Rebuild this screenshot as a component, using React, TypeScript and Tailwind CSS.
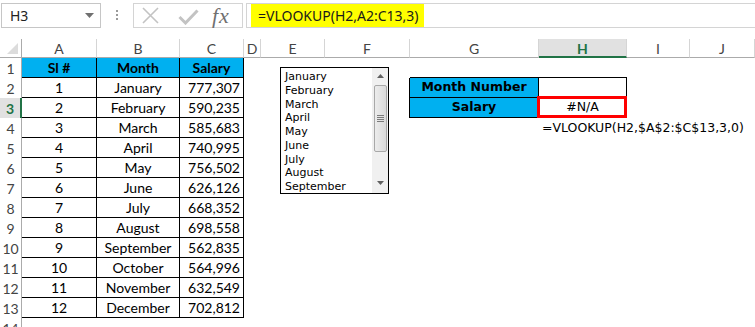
import React from "react";

const LETTERS = ["", "A", "B", "C", "D", "E", "F", "G", "H", "I", "J"];

const DATA: string[][] = [
  ["Sl #", "Month", "Salary"],
  ["1", "January", "777,307"],
  ["2", "February", "590,235"],
  ["3", "March", "585,683"],
  ["4", "April", "740,995"],
  ["5", "May", "756,502"],
  ["6", "June", "626,126"],
  ["7", "July", "668,352"],
  ["8", "August", "698,558"],
  ["9", "September", "562,835"],
  ["10", "October", "564,996"],
  ["11", "November", "632,549"],
  ["12", "December", "702,812"],
];

const MONTHS = ["January", "February", "March", "April", "May", "June", "July", "August", "September"];

function Cell({ r, c }: { r: number; c: number }) {
  // column header row
  if (r === 0) {
    if (c === 0) {
      return (
        <div className="relative border-r border-b border-r-[#ababab] border-b-[#ababab]">
          <svg className="absolute left-0 top-0" width="21" height="19" viewBox="0 0 21 19">
            <polygon points="18,4 18,15 7,15" fill="#dcdcdc" />
          </svg>
        </div>
      );
    }
    if (c === 8) {
      return (
        <div className="flex items-center justify-center bg-[#e1e1e1] border-r border-r-[#d5d5d5] border-b-2 border-b-[#217346] text-[#217346] font-bold pt-[1px]">
          {LETTERS[c]}
        </div>
      );
    }
    return (
      <div className="flex items-center justify-center border-r border-b border-r-[#d5d5d5] border-b-[#ababab] text-[#444444]">
        {LETTERS[c]}
      </div>
    );
  }
  // row header
  if (c === 0) {
    if (r === 3) {
      return (
        <div className="flex items-center justify-center bg-[#e1e1e1] border-r-2 border-r-[#217346] text-[#217346] font-bold">
          {r}
        </div>
      );
    }
    return (
      <div className="flex items-center justify-center border-r border-r-[#ababab] text-[#444444]">
        {r}
      </div>
    );
  }
  // data table A1:C13
  if (r >= 1 && r <= 13 && c >= 1 && c <= 3) {
    const text = DATA[r - 1][c - 1];
    if (r === 1) {
      return (
        <div className="flex items-center justify-center bg-[#00b0f0] border-r border-b border-black font-bold text-black">
          {text}
        </div>
      );
    }
    if (c === 3) {
      return (
        <div className="flex items-center justify-end pr-[3px] border-r border-b border-black text-black">
          {text}
        </div>
      );
    }
    return (
      <div className="flex items-center justify-center border-r border-b border-black text-black">
        {text}
      </div>
    );
  }
  // lookup table G2:H3
  if ((r === 2 || r === 3) && c === 6) {
    return <div className="border-r border-black" />;
  }
  if (r === 1 && (c === 7 || c === 8)) {
    return <div className="border-b border-black" />;
  }
  if (r === 2 && c === 7) {
    return (
      <div className="flex items-center justify-center bg-[#00b0f0] border-r border-b border-black font-['DejaVu_Sans',sans-serif] font-bold text-[12.5px] text-black">
        Month Number
      </div>
    );
  }
  if (r === 3 && c === 7) {
    return (
      <div className="flex items-center justify-center bg-[#00b0f0] border-r border-b border-black font-['DejaVu_Sans',sans-serif] font-bold text-[12.5px] text-black">
        Salary
      </div>
    );
  }
  if (r === 2 && c === 8) {
    return <div className="border-r border-b border-black" />;
  }
  if (r === 3 && c === 8) {
    return (
      <div className="flex items-center justify-center border-r border-b border-black font-['DejaVu_Sans',sans-serif] text-[12.5px] text-black">
        #N/A
      </div>
    );
  }
  if (r === 4 && c === 8) {
    return (
      <div className="flex items-center pl-[3px] whitespace-nowrap overflow-visible font-['DejaVu_Sans',sans-serif] text-[12.5px] text-black">
        =VLOOKUP(H2,$A$2:$C$13,3,0)
      </div>
    );
  }
  return <div />;
}

function ListBox() {
  return (
    <div className="absolute left-[280px] top-[67px] w-[109px] h-[127px] border border-black bg-white overflow-hidden">
      <div className="pl-[4px] pt-[2px] font-['DejaVu_Sans',sans-serif] text-[11px] leading-[13.75px] text-black">
        {MONTHS.map((m) => (
          <div key={m}>{m}</div>
        ))}
      </div>
      <div className="absolute right-0 top-0 bottom-0 w-[16px] bg-[#f0f0f0] border-l border-l-[#f0f0f0]">
        <svg className="absolute left-[4px] top-[6px]" width="7" height="5" viewBox="0 0 7 5">
          <polygon points="0,4 7,4 3.5,0" fill="#606060" />
        </svg>
        <div className="absolute left-[1px] right-[1px] top-[17px] h-[67px] rounded-[2px] border border-[#a8a8a8] bg-gradient-to-r from-[#ececec] to-[#dadada] flex items-center justify-center">
          <div className="flex flex-col gap-[1px]">
            <div className="w-[7px] h-[1px] bg-[#7a7a7a]" />
            <div className="w-[7px] h-[1px] bg-[#7a7a7a]" />
            <div className="w-[7px] h-[1px] bg-[#7a7a7a]" />
            <div className="w-[7px] h-[1px] bg-[#7a7a7a]" />
          </div>
        </div>
        <svg className="absolute left-[4px] bottom-[7px]" width="7" height="5" viewBox="0 0 7 5">
          <polygon points="0,0 7,0 3.5,4" fill="#606060" />
        </svg>
      </div>
    </div>
  );
}

export default function App() {
  const rows = Array.from({ length: 15 }, (_, i) => i);
  const cols = Array.from({ length: 11 }, (_, i) => i);
  return (
    <div className="relative w-[755px] h-[327px] overflow-hidden bg-white font-['Lato',sans-serif] text-[14px]">
      {/* formula bar */}
      <div className="flex h-[39px] items-start pt-[3px]">
        <div className="ml-[1px] w-[100px] h-[25px] border border-[#c6c6c6] flex items-center justify-between pl-[8px] pr-[6px] font-['Noto_Sans',sans-serif] text-[14px] text-[#222222]">
          <span>H3</span>
          <svg width="9" height="5" viewBox="0 0 9 5">
            <polygon points="0,0 9,0 4.5,5" fill="#707070" />
          </svg>
        </div>
        <div className="ml-[15px] mt-[7px] flex flex-col gap-[2px]">
          <div className="w-[2px] h-[2px] bg-[#9a9a9a]" />
          <div className="w-[2px] h-[2px] bg-[#9a9a9a]" />
          <div className="w-[2px] h-[2px] bg-[#9a9a9a]" />
        </div>
        <div className="ml-[15px] w-[110px] h-[25px] border border-[#d4d4d4] flex items-center">
          <svg className="ml-[8px]" width="17" height="17" viewBox="0 0 17 17">
            <path d="M1 1 L16 16 M16 1 L1 16" stroke="#c3c3c3" strokeWidth="1.6" fill="none" />
          </svg>
          <svg className="ml-[19px] mt-[2px]" width="21" height="16" viewBox="0 0 21 16">
            <path d="M1.5 8 L7.5 14 L19.5 1.5" stroke="#c3c3c3" strokeWidth="3" fill="none" />
          </svg>
          <span className="ml-[13px] font-['Liberation_Serif',serif] italic text-[22px] leading-none text-[#707070] tracking-[1px]">
            fx
          </span>
        </div>
        <div className="ml-[3px] flex-1 h-[25px] border border-r-0 border-[#d4d4d4] pl-[4px] flex">
          <div className="min-w-[165px] h-full bg-[#ffff00] flex items-center pl-[7px] pr-[5px] font-['Noto_Sans',sans-serif] text-[14px] text-[#1a1a1a] whitespace-nowrap">
            =VLOOKUP(H2,A2:C13,3)
          </div>
        </div>
      </div>

      {/* sheet */}
      <div className="grid grid-cols-[22px_75px_83px_64px_17px_64px_85px_129px_88px_63px_65px] grid-rows-[19px_repeat(14,20px)]">
        {rows.map((r) => cols.map((c) => <Cell key={`${r}-${c}`} r={r} c={c} />))}
      </div>

      {/* selected cell outline */}
      <div className="absolute left-[537px] top-[96px] w-[90px] h-[22px] border-[3px] border-[#ff0000] pointer-events-none" />

      <ListBox />
    </div>
  );
}
